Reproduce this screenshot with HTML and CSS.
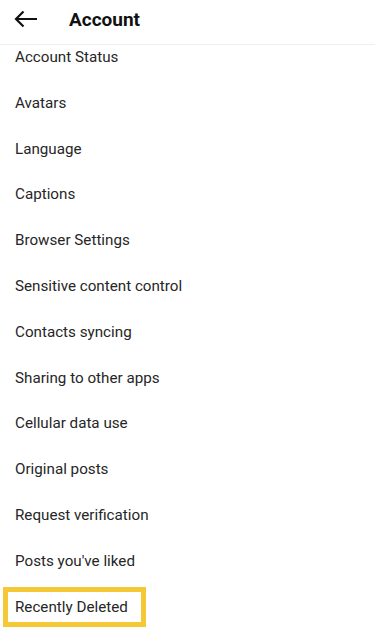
FILE: index.html
```html
<!DOCTYPE html>
<html lang="en">
  <head>
    <meta charset="utf-8" />
    <title>Account</title>
    <link rel="stylesheet" href="styles.css">
  </head>
  <body>
    <div class="header">
      <svg class="back" width="24" height="18" viewBox="0 0 24 18">
        <path d="M23 9H2M9.5 1.5L2 9l7.5 7.5" fill="none" stroke="#111" stroke-width="2.2" stroke-linejoin="miter"/>
      </svg>
      <div class="title">Account</div>
    </div>

    <div class="list">
      <div class="item">Account Status</div>
      <div class="item">Avatars</div>
      <div class="item">Language</div>
      <div class="item">Captions</div>
      <div class="item">Browser Settings</div>
      <div class="item">Sensitive content control</div>
      <div class="item">Contacts syncing</div>
      <div class="item">Sharing to other apps</div>
      <div class="item">Cellular data use</div>
      <div class="item">Original posts</div>
      <div class="item">Request verification</div>
      <div class="item">Posts you've liked</div>
      <div class="item highlight">Recently Deleted</div>
    </div>
  </body>
</html>
```

FILE: styles.css
```css
body {
  margin: 0;
  background: #fff;
  font-family: Roboto, "Noto Sans", sans-serif;
  color: #262626;
  overflow: hidden;
}
.header {
  height: 45px;
  display: flex;
  align-items: center;
  border-bottom: 1px solid #efefef;
  box-sizing: border-box;
  padding-left: 14px;
  padding-bottom: 6px;
}
.title {
  margin-left: 31px;
  font-size: 19px;
  font-weight: bold;
  color: #111;
}
.list {
  margin-top: 1px;
}
.item {
  height: 45.8px;
  line-height: 22px;
  padding-left: 15px;
  font-size: 15.2px;
  box-sizing: border-box;
}
.highlight {
  margin-left: 3px;
  margin-top: -9px;
  width: 143px;
  height: 40px;
  border: 5px solid #f5c935;
  padding: 4px 0 0 7px;
}
```
